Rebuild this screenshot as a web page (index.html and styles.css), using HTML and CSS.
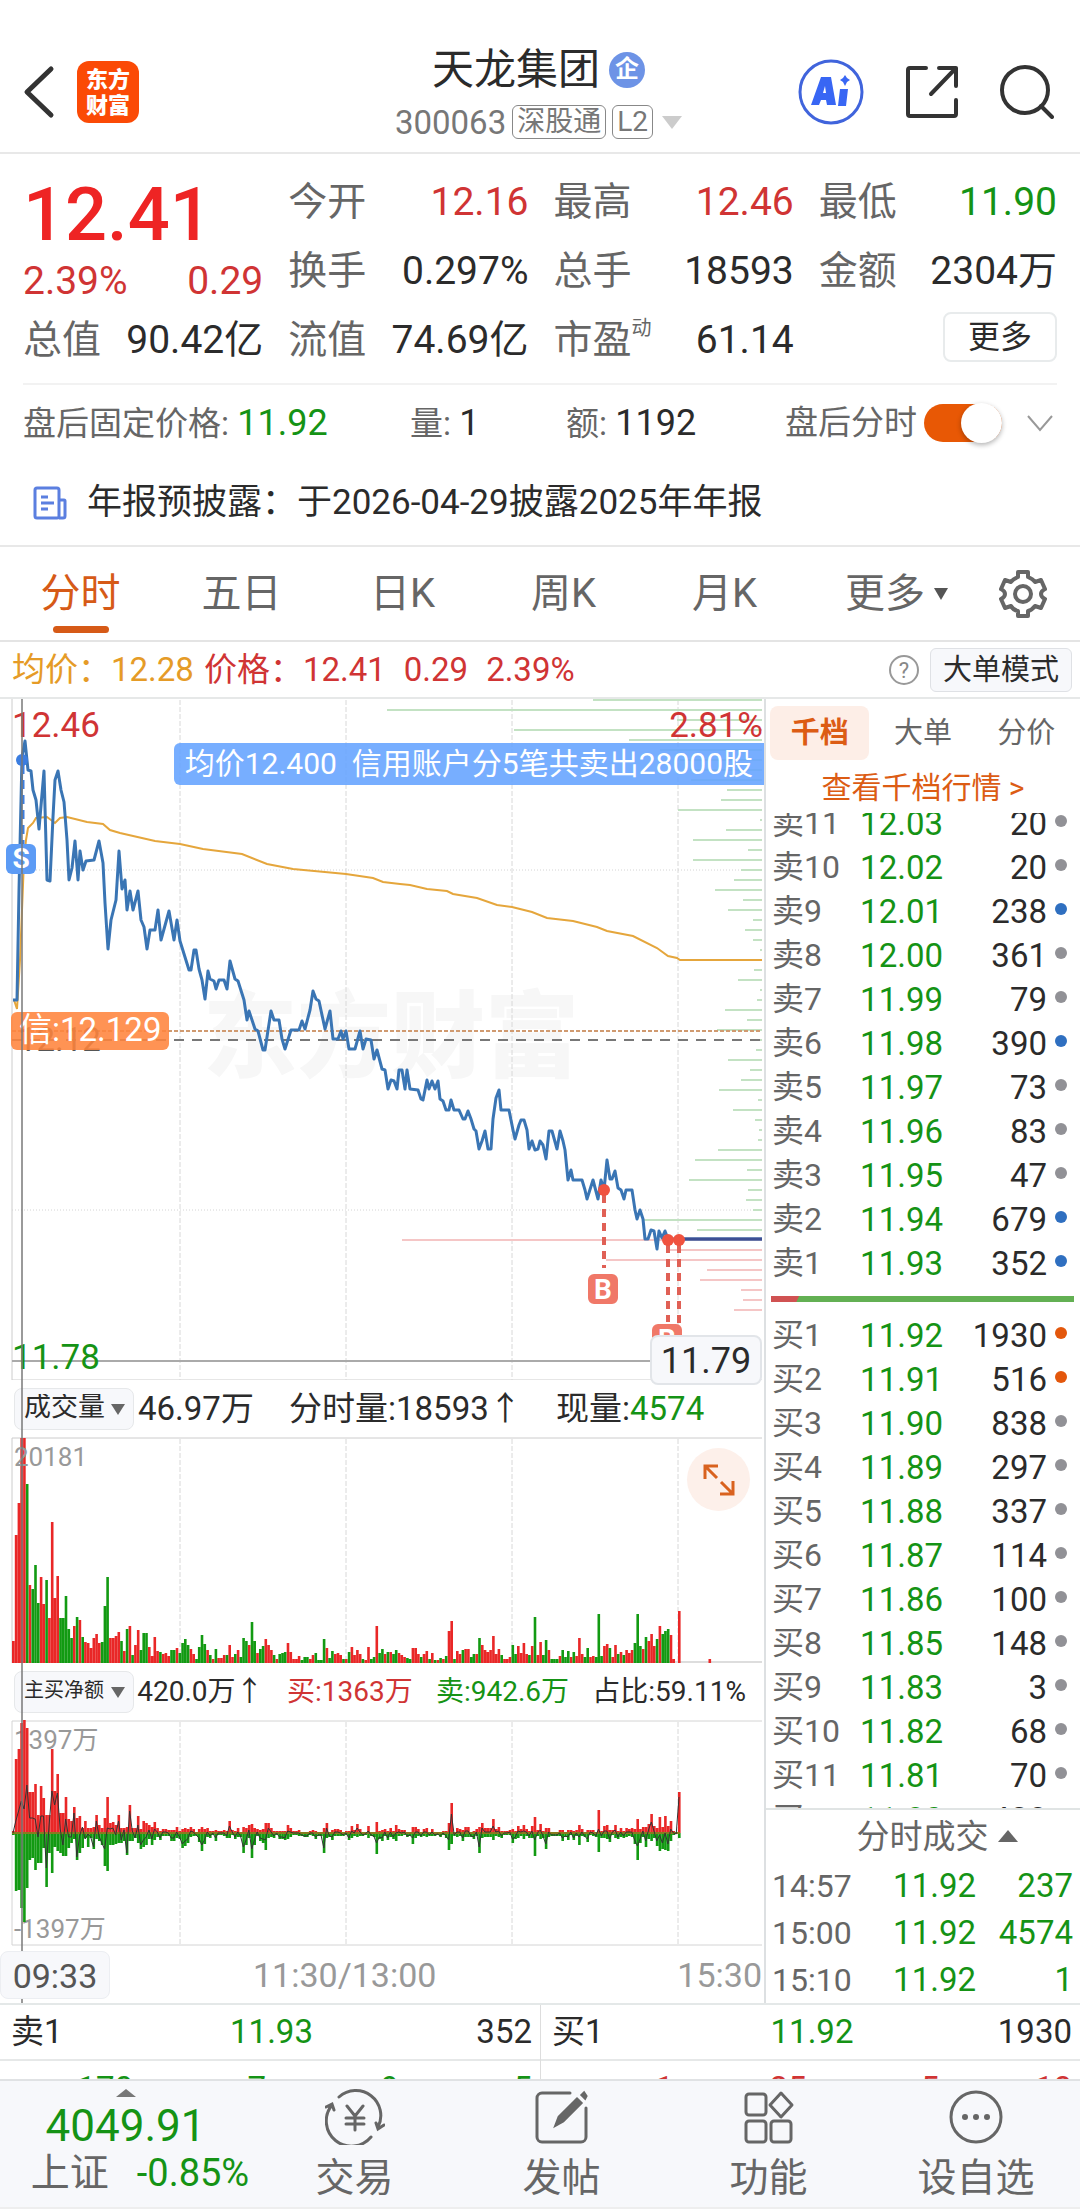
FILE: index.html
```html
<!DOCTYPE html>
<html lang="zh-CN">
<head>
<meta charset="utf-8">
<meta name="viewport" content="width=device-width">
<title>天龙集团 300063</title>
<link rel="stylesheet" href="styles.css">
</head>
<body>
<header class="topbar">
  <div class="topbar-side">
    <button class="icon-btn back" aria-label="返回"><svg width="32" height="54" viewBox="0 0 32 54"><path d="M28 4 4 27l24 23" fill="none" stroke="#333" stroke-width="5" stroke-linecap="round" stroke-linejoin="round"/></svg></button>
    <span class="logo">东方<br>财富</span>
  </div>
  <div class="title-block">
    <h1 class="stock-name">天龙集团<span class="corp">企</span></h1>
    <p class="stock-code">300063<span class="tag">深股通</span><span class="tag">L2</span><svg class="drop" width="20" height="13" viewBox="0 0 20 13"><path d="M0 0h20L10 13z" fill="#ccc"/></svg></p>
  </div>
  <div class="topbar-side topbar-actions">
    <button class="icon-btn" aria-label="AI"><svg width="66" height="66" viewBox="0 0 66 66"><circle cx="33" cy="33" r="31" fill="none" stroke="#4064dc" stroke-width="3"/><path d="M13 46 23 18h10l5 28h-9l-1-5h-5l-2 5zM25 34h3l-1-7zM42 30h8l-2 17h-8z" fill="#3866f4"/><path d="m47 16 2 3 3 2-3 2-2 4-2-4-3-2 3-2z" fill="#3866f4"/></svg></button>
    <button class="icon-btn" aria-label="分享"><svg width="54" height="54" viewBox="0 0 54 54" fill="none" stroke="#333" stroke-width="4" stroke-linecap="round" stroke-linejoin="round"><path d="M21 3H5a2 2 0 0 0-2 2v44a2 2 0 0 0 2 2h44a2 2 0 0 0 2-2V35M34 3h17v18M51 3 26 29"/></svg></button>
    <button class="icon-btn" aria-label="搜索"><svg width="54" height="54" viewBox="0 0 54 54" fill="none" stroke="#333" stroke-width="4" stroke-linecap="round"><circle cx="25" cy="25" r="23"/><path d="m41 41 11 11"/></svg></button>
  </div>
</header>

<section class="quote">
  <div class="quote-col">
    <div class="last up">12.41</div>
    <div class="pair change up"><span>2.39%</span><span>0.29</span></div>
    <div class="pair"><span class="lbl">总值</span><span>90.42亿</span></div>
  </div>
  <div class="quote-col">
    <div class="pair"><span class="lbl">今开</span><span class="up">12.16</span></div>
    <div class="pair"><span class="lbl">换手</span><span>0.297%</span></div>
    <div class="pair"><span class="lbl">流值</span><span>74.69亿</span></div>
  </div>
  <div class="quote-col">
    <div class="pair"><span class="lbl">最高</span><span class="up">12.46</span></div>
    <div class="pair"><span class="lbl">总手</span><span>18593</span></div>
    <div class="pair"><span class="lbl">市盈<sup>动</sup></span><span>61.14</span></div>
  </div>
  <div class="quote-col">
    <div class="pair"><span class="lbl">最低</span><span class="down">11.90</span></div>
    <div class="pair"><span class="lbl">金额</span><span>2304万</span></div>
    <div class="pair pair-end"><button class="more-btn">更多</button></div>
  </div>
</section>

<section class="after">
  <span class="after-price">盘后固定价格: <b class="down">11.92</b></span>
  <span class="after-vol">量: <b>1</b></span>
  <span class="after-amt">额: <b>1192</b></span>
  <label class="switch-row">盘后分时<input type="checkbox" class="switch" checked></label>
  <svg width="28" height="18" viewBox="0 0 28 18"><path d="m2 2 12 14L26 2" fill="none" stroke="#999" stroke-width="2"/></svg>
</section>

<a class="news" href="#report">
  <svg width="34" height="34" viewBox="0 0 34 34" fill="none" stroke="#5b7fe0" stroke-width="3"><rect x="2" y="2" width="24" height="30" rx="2"/><path d="M26 14h5a1 1 0 0 1 1 1v15a2 2 0 0 1-2 2h-4M8 11h7M8 17h13M8 23h7"/></svg>
  <span>年报预披露：于2026-04-29披露2025年年报</span>
</a>

<nav class="period">
  <button class="period-tab active">分时</button>
  <button class="period-tab">五日</button>
  <button class="period-tab">日K</button>
  <button class="period-tab">周K</button>
  <button class="period-tab">月K</button>
  <button class="period-tab more-tab">更多<svg width="14" height="12" viewBox="0 0 14 12"><path d="M0 0h14L7 12z" fill="#555"/></svg></button>
  <button class="icon-btn gear" aria-label="设置"><svg width="48" height="50" viewBox="0 0 48 50" fill="none" stroke="#666" stroke-width="4" stroke-linejoin="round"><path d="M19 3h10v5q5 2 7 5l6-2 4 9q-4 2-4 5t4 5l-4 9-6-2q-3 4-7 5v5H19v-5q-5-1-7-5l-6 2-4-9q4-2 4-5t-4-5l4-9 6 2q2-3 7-5z"/><circle cx="24" cy="25" r="8"/></svg></button>
</nav>

<div class="legend">
  <span class="avg">均价：12.28</span>
  <span class="up">价格：12.41</span>
  <span class="up">0.29</span>
  <span class="up">2.39%</span>
  <span class="help">?</span>
  <button class="mode-btn">大单模式</button>
</div>

<main class="board">
  <section class="charts">
    <div class="pane pane-price">
      <span class="watermark">东方财富</span>
      <svg class="plot" viewBox="0 699 764 681" preserveAspectRatio="none" fill="none">
        <path d="M12 699V1380H762" stroke="#ccc"/>
        <path d="M180 700V1380M346 700V1380M512 700V1380M678 700V1380" stroke="#d8d8d8" stroke-dasharray="5 2"/>
        <path d="M12 870H762M12 1210H762" stroke="#d4d4d4" stroke-dasharray="1 2"/>
        <path id="depthSell" stroke="#c3e2c3" stroke-width="2"/>
        <path id="depthBuy" stroke="#f5c6c6" stroke-width="2"/>
        <path d="M12 1040H762" stroke="#777" stroke-width="2" stroke-dasharray="10 8"/>
        <path d="M12 1031H762" stroke="#d09a70" stroke-width="2" stroke-dasharray="4 2"/>
        <path d="M12 1361H762" stroke="#aaa" stroke-width="2"/>
        <polyline stroke="#e5a63c" stroke-width="2" points="14,1000 17,1009 20,960 24,860 26,840 28,828 33,823 36,818 47,817 55,823 60,818 67,817 87,822 103,824 110,830 120,833 155,841 180,844 203,849 242,854 267,864 293,869 346,874 373,878 383,882 400,884 410,885 427,889 447,891 453,894 477,898 497,905 512,907 532,912 547,918 573,921 597,927 607,931 633,936 657,948 668,956 677,958 680,960 762,960"/>
        <polyline stroke="#3a75b4" stroke-width="3" stroke-linejoin="round" points="13,1000 17,1000 19,890 22,757 25,741 28,770 31,771 33,790 36,800 39,829 44,771 47,880 50,881 53,817 55,780 58,771 61,790 64,802 67,840 69,880 72,868 75,841 78,880 80,851 83,870 86,861 94,860 99,841 103,863 105,903 108,949 111,920 116,900 119,851 122,889 125,880 127,910 130,891 133,910 138,891 141,920 144,927 147,949 150,930 155,930 158,910 161,940 169,911 174,940 177,920 180,941 189,970 191,970 194,950 196,950 199,969 202,980 205,999 208,971 210,979 214,981 216,989 219,980 224,980 227,989 230,961 235,979 238,981 244,1000 247,1020 249,1011 255,1029 258,1031 263,1050 265,1050 271,1011 274,1020 279,1020 282,1039 285,1049 291,1030 299,1030 302,1021 305,1029 310,1010 313,991 316,999 319,1001 325,1029 330,1011 333,1039 338,1039 341,1031 343,1039 346,1031 349,1049 355,1049 360,1031 363,1049 366,1039 371,1040 374,1059 377,1050 382,1069 385,1070 388,1089 391,1080 394,1081 397,1089 399,1070 402,1070 405,1089 407,1070 410,1089 418,1090 421,1099 423,1100 427,1080 429,1089 432,1081 435,1089 438,1081 440,1099 443,1101 446,1110 449,1110 451,1100 454,1110 459,1110 463,1119 465,1119 468,1111 471,1119 474,1129 476,1131 479,1149 482,1141 485,1131 488,1149 491,1149 493,1119 496,1098 499,1090 501,1110 509,1110 513,1130 515,1139 519,1125 521,1120 524,1120 527,1130 529,1149 532,1141 535,1150 538,1149 540,1141 543,1145 546,1159 549,1131 552,1131 557,1149 560,1131 563,1141 565,1150 568,1180 571,1170 573,1180 582,1180 585,1190 587,1199 593,1180 598,1199 601,1180 604,1190 607,1160 610,1179 612,1179 615,1171 618,1188 621,1190 624,1199 626,1190 632,1190 635,1210 637,1219 640,1210 643,1219 645,1239 648,1239 651,1230 654,1231 657,1249 659,1231 662,1238 665,1231 668,1239 762,1239"/>
        <path d="M23 765V845" stroke="#3b7de0" stroke-width="3" stroke-dasharray="9 6"/>
        <circle cx="22" cy="760" r="6" fill="#3b7de0"/>
        <path d="M604 1195V1268M668 1245V1322M679 1245V1330" stroke="#e06055" stroke-width="4" stroke-dasharray="8 6"/>
        <path d="M684 1239H762" stroke="#3d4f94" stroke-width="3"/>
        <g fill="#f0523f"><circle cx="604" cy="1190" r="6"/><circle cx="668" cy="1240" r="6"/><circle cx="679" cy="1240" r="6"/></g>
      </svg>
      <span class="over high up">12.46</span>
      <span class="over high-pct up">2.81%</span>
      <span class="over low down">11.78</span>
      <span class="over mid">12.12</span>
      <span class="over cost">信:12.129</span>
      <span class="over trade-tip">均价12.400&nbsp; 信用账户分5笔共卖出28000股</span>
      <span class="over mark mark-s">S</span>
      <span class="over mark mark-b">B</span>
      <span class="over mark mark-b mark-b2">B</span>
      <span class="over cursor-price">11.79</span>
    </div>

    <div class="pane-head">
      <span class="picker"><select aria-label="副图指标一"><option>成交量</option></select></span>
      <span class="item-a">46.97万</span><span class="item-b">分时量:18593↑</span><span>现量:<span class="down">4574</span></span>
    </div>
    <div class="pane pane-sub">
      <svg class="plot" viewBox="0 0 764 226" preserveAspectRatio="none" fill="none">
        <path d="M12 226V1H762" stroke="#ccc"/>
        <path d="M180 2V226M346 2V226M512 2V226M678 2V226" stroke="#d8d8d8" stroke-dasharray="5 2"/>
        <path d="M12 225H762" stroke="#ddd" stroke-width="2"/>
        <path id="volUp" fill="#e92727"/>
        <path id="volDown" fill="#129a12"/>
      </svg>
      <span class="over scale-top">20181</span>
      <button class="over expand" aria-label="全屏"><svg width="32" height="32" viewBox="0 0 32 32" fill="none" stroke="#d9621f" stroke-width="3"><path d="M2 15V2h13M2 2l12 12M30 17v13H17M30 30 18 18"/></svg></button>
    </div>

    <div class="pane-head compact">
      <span class="picker"><select aria-label="副图指标二"><option>主买净额</option></select></span>
      <span>420.0万↑</span><span class="up">买:1363万</span><span class="down">卖:942.6万</span><span>占比:59.11%</span>
    </div>
    <div class="pane pane-sub">
      <span class="over scale-top">1397万</span>
      <span class="over scale-bottom">-1397万</span>
      <svg class="plot" viewBox="0 0 764 226" preserveAspectRatio="none" fill="none">
        <path d="M12 225V1H762M12 225H762" stroke="#d4d4d4"/>
        <path d="M180 2V226M346 2V226M512 2V226M678 2V226" stroke="#d8d8d8" stroke-dasharray="5 2"/>
        <path id="netUp" fill="#e92727"/>
        <path id="netDown" fill="#129a12"/>
        <path d="M12 113H680" stroke="#8a7a20" stroke-width="2"/>
        <path id="netLine" stroke="#333" stroke-width="1"/>
      </svg>
    </div>
    <div class="time-axis"><span class="cursor-time">09:33</span><span class="noon">11:30/13:00</span><span>15:30</span></div>
    <i class="crosshair"></i>
  </section>

  <aside class="book">
    <div class="book-tabs">
      <button class="book-tab active">千档</button><button class="book-tab">大单</button><button class="book-tab">分价</button>
    </div>
    <a class="book-link" href="#levels">查看千档行情 &gt;</a>
    <div class="book-sell">
      <table class="levels">
        <tr><th>卖11</th><td class="down">12.03</td><td>20</td><td><i class="dot"></i></td></tr>
        <tr><th>卖10</th><td class="down">12.02</td><td>20</td><td><i class="dot"></i></td></tr>
        <tr><th>卖9</th><td class="down">12.01</td><td>238</td><td><i class="dot blue"></i></td></tr>
        <tr><th>卖8</th><td class="down">12.00</td><td>361</td><td><i class="dot"></i></td></tr>
        <tr><th>卖7</th><td class="down">11.99</td><td>79</td><td><i class="dot"></i></td></tr>
        <tr><th>卖6</th><td class="down">11.98</td><td>390</td><td><i class="dot blue"></i></td></tr>
        <tr><th>卖5</th><td class="down">11.97</td><td>73</td><td><i class="dot"></i></td></tr>
        <tr><th>卖4</th><td class="down">11.96</td><td>83</td><td><i class="dot"></i></td></tr>
        <tr><th>卖3</th><td class="down">11.95</td><td>47</td><td><i class="dot"></i></td></tr>
        <tr><th>卖2</th><td class="down">11.94</td><td>679</td><td><i class="dot blue"></i></td></tr>
        <tr><th>卖1</th><td class="down">11.93</td><td>352</td><td><i class="dot blue"></i></td></tr>
      </table>
    </div>
    <div class="ratio"></div>
    <div class="book-buy">
      <table class="levels">
        <tr><th>买1</th><td class="down">11.92</td><td>1930</td><td><i class="dot orange"></i></td></tr>
        <tr><th>买2</th><td class="down">11.91</td><td>516</td><td><i class="dot orange"></i></td></tr>
        <tr><th>买3</th><td class="down">11.90</td><td>838</td><td><i class="dot"></i></td></tr>
        <tr><th>买4</th><td class="down">11.89</td><td>297</td><td><i class="dot"></i></td></tr>
        <tr><th>买5</th><td class="down">11.88</td><td>337</td><td><i class="dot"></i></td></tr>
        <tr><th>买6</th><td class="down">11.87</td><td>114</td><td><i class="dot"></i></td></tr>
        <tr><th>买7</th><td class="down">11.86</td><td>100</td><td><i class="dot"></i></td></tr>
        <tr><th>买8</th><td class="down">11.85</td><td>148</td><td><i class="dot"></i></td></tr>
        <tr><th>买9</th><td class="down">11.83</td><td>3</td><td><i class="dot"></i></td></tr>
        <tr><th>买10</th><td class="down">11.82</td><td>68</td><td><i class="dot"></i></td></tr>
        <tr><th>买11</th><td class="down">11.81</td><td>70</td><td><i class="dot"></i></td></tr>
        <tr><th>买12</th><td class="down">11.80</td><td>428</td><td></td></tr>
      </table>
    </div>
    <button class="ticks-head">分时成交<svg width="20" height="12" viewBox="0 0 20 12"><path d="M0 12h20L10 0z" fill="#666"/></svg></button>
    <table class="ticks">
      <tr><th>14:57</th><td>11.92</td><td>237</td></tr>
      <tr><th>15:00</th><td>11.92</td><td>4574</td></tr>
      <tr><th>15:10</th><td>11.92</td><td>1</td></tr>
    </table>
  </aside>
</main>

<section class="best">
  <div class="best-side">
    <div class="best-row"><span>卖1</span><span class="down">11.93</span><span>352</span></div>
    <div class="queue down"><span>170</span><span>7</span><span>9</span><span>5</span></div>
  </div>
  <div class="best-side">
    <div class="best-row"><span>买1</span><span class="down">11.92</span><span>1930</span></div>
    <div class="queue up"><span>1</span><span>25</span><span>5</span><span>18</span></div>
  </div>
</section>

<footer class="dock">
  <button class="index-card">
    <svg width="20" height="8" viewBox="0 0 20 8"><path d="M0 8h20L10 0z" fill="#777"/></svg>
    <span class="index-value down">4049.91</span>
    <span class="index-line">上证<span class="down">-0.85%</span></span>
  </button>
  <a class="dock-item" href="#trade"><svg width="60" height="56" viewBox="0 0 60 56" fill="none" stroke="#666" stroke-width="3" stroke-linecap="round"><path d="M14 8A25 25 0 0 1 53 38M46 48A25 25 0 0 1 7 16M1 18l6-3 2 6M59 36l-6 4-2-6M22 17l8 10 8-10M30 27v14M21 29h18M21 35h18"/></svg>交易</a>
  <a class="dock-item" href="#post"><svg width="60" height="56" viewBox="0 0 60 56" fill="none" stroke="#666" stroke-width="3" stroke-linecap="round"><path d="M38 4H10a5 5 0 0 0-5 5v39a5 5 0 0 0 5 5h39a5 5 0 0 0 5-5V19"/><path d="m24 36 3-8 18-18 4 4-18 18zM50 6l2-2 2 3-1 2z" fill="#666"/></svg>发帖</a>
  <a class="dock-item" href="#tools"><svg width="60" height="56" viewBox="0 0 60 56" fill="none" stroke="#666" stroke-width="3" stroke-linejoin="round"><rect x="7" y="5" width="20" height="21" rx="3"/><rect x="7" y="32" width="20" height="21" rx="3"/><rect x="32" y="32" width="20" height="21" rx="3"/><path d="m42 4 11 12-11 12-11-12z"/></svg>功能</a>
  <a class="dock-item" href="#watch"><svg width="60" height="56" viewBox="0 0 60 56"><circle cx="30" cy="28" r="25" fill="none" stroke="#666" stroke-width="3"/><g fill="#666"><circle cx="19" cy="28" r="3"/><circle cx="30" cy="28" r="3"/><circle cx="41" cy="28" r="3"/></g></svg>设自选</a>
</footer>
<script src="charts.js"></script>
</body>
</html>
```

FILE: styles.css
```css
* { box-sizing: border-box; }
body {
  margin: 0;
  background: #fff;
  color: #2b2b2b;
  font-family: Roboto, "Noto Sans CJK SC", sans-serif;
  font-size: 33px;
  line-height: 1;
}
button, select { font: inherit; color: inherit; background: none; border: 0; padding: 0; margin: 0; }
a { color: inherit; text-decoration: none; }
h1, p { margin: 0; font-weight: 400; }
svg { display: block; flex: none; }
table { border-collapse: collapse; width: 100%; }
th, td { padding: 0; font-weight: 400; }
b { font-weight: 400; }

.up { color: #d03434; }
.down { color: #159315; }
.lbl { color: #666; }
.icon-btn { display: flex; }

/* header */
.topbar {
  display: grid;
  grid-template-columns: 1fr auto 1fr;
  height: 154px;
  padding: 31px 26px 0 23px;
  border-bottom: 2px solid #e8e8e8;
}
.topbar-side { display: flex; align-items: center; gap: 22px; }
.topbar-actions { justify-content: flex-end; gap: 41px; }
.logo {
  width: 62px; height: 62px; padding-top: 6px;
  border-radius: 12px; background: #fb4a06; color: #fff;
  font-size: 22px; font-weight: 900; line-height: 26px; text-align: center;
}
.title-block { display: flex; flex-direction: column; align-items: center; gap: 12px; padding-top: 16px; }
.stock-name { display: flex; align-items: center; gap: 9px; font-size: 42px; line-height: 46px; }
.corp {
  width: 36px; height: 36px; border-radius: 50%; background: #6d93e6; color: #fff;
  font-size: 24px; font-weight: 700; line-height: 34px; text-align: center;
}
.stock-code { display: flex; align-items: center; gap: 6px; color: #777; }
.tag { height: 34px; padding: 0 4px; border: 1px solid #888; border-radius: 6px; font-size: 28px; line-height: 31px; }
.drop { margin-left: 3px; }

/* quote summary */
.quote {
  display: grid;
  grid-template-columns: 240fr 240fr 240fr 238fr;
  column-gap: 25px;
  margin: 0 23px;
  padding: 14px 0 8px;
  border-bottom: 2px solid #f2f2f2;
  font-size: 39px;
}
.quote-col { display: flex; flex-direction: column; }
.pair { display: flex; justify-content: space-between; height: 69px; line-height: 69px; white-space: nowrap; }
.last { height: 86px; padding-top: 12px; font-size: 74px; font-weight: 500; line-height: 69px; color: #ee2424; }
.change { height: 52px; line-height: 54px; }
.pair sup { font-size: 20px; line-height: 20px; vertical-align: 18px; }
.pair-end { justify-content: flex-end; }
.more-btn { width: 114px; height: 50px; margin-top: 6px; border: 2px solid #e8ebec; border-radius: 8px; font-size: 32px; line-height: 44px; }

/* after-hours line */
.after { display: flex; align-items: center; height: 75px; padding: 0 26px 0 23px; color: #666; }
.after b { font-size: 36px; color: #2b2b2b; }
.after b.down { color: #159315; }
.after-price { width: 387px; }
.after-vol { width: 156px; }
.after-amt { flex: 1; }
.switch-row { display: flex; align-items: center; gap: 7px; margin-right: 24px; }
.switch {
  appearance: none; position: relative; width: 78px; height: 38px; margin: 0;
  border-radius: 19px; background: #e85805;
}
.switch::after {
  content: ""; position: absolute; top: -1px; right: 0; width: 41px; height: 40px;
  border-radius: 50%; background: #fff; box-shadow: 0 2px 5px rgba(0, 0, 0, .3);
}

.news { display: flex; align-items: center; gap: 20px; height: 87px; padding: 0 33px; border-bottom: 2px solid #e8e8e8; font-size: 35px; }

/* period tabs */
.period { display: grid; grid-template-columns: repeat(6, minmax(0, 161fr)) minmax(0, 114fr); height: 95px; border-bottom: 2px solid #e4e4e4; color: #666; font-size: 40px; }
.period-tab { position: relative; display: flex; align-items: center; justify-content: center; gap: 9px; }
.more-tab { padding-left: 22px; }
.period-tab.active { color: #d65a17; }
.period-tab.active::after { content: ""; position: absolute; bottom: 7px; width: 56px; height: 7px; border-radius: 4px; background: #d65a17; }
.gear { align-items: center; justify-content: center; }

.legend { display: flex; align-items: center; gap: 18px; height: 57px; padding: 0 8px 0 12px; border-bottom: 2px solid #e6e8e8; font-size: 33px; }
.avg { color: #e59b27; margin-right: -8px; }
.help { width: 30px; height: 30px; margin-left: auto; margin-right: -7px; border: 2px solid #999; border-radius: 50%; color: #888; font-size: 22px; line-height: 27px; text-align: center; }
.mode-btn { width: 142px; height: 44px; border: 1px solid #dfe1e5; border-radius: 6px; background: #f7f8fb; font-size: 29px; line-height: 38px; }

/* charts and order book */
.board { display: grid; grid-template-columns: minmax(0, 764fr) minmax(0, 316fr); border-bottom: 2px solid #e4e8e8; }
.charts { position: relative; }
.pane { position: relative; }
.pane-price { height: 681px; }
.pane-sub { height: 226px; }
.plot { position: relative; width: 100%; height: 100%; }
.watermark { position: absolute; top: 284px; left: 0; width: 100%; padding-left: 18px; color: #f7f7f7; font-size: 94px; font-weight: 900; line-height: 110px; text-align: center; }
.over { position: absolute; white-space: nowrap; }
.high { top: 9px; left: 12px; font-size: 35px; }
.high-pct { top: 9px; right: 1px; font-size: 35px; }
.low { bottom: 5px; left: 12px; font-size: 35px; }
.mid { top: 324px; left: 18px; color: #555; }
.cost { top: 313px; left: 11px; height: 38px; padding: 0 8px; border-radius: 6px; background: rgba(255, 132, 60, .88); color: #fff; line-height: 36px; }
.trade-tip { top: 44px; right: 0; height: 42px; padding: 0 11px; border-radius: 6px 0 0 6px; background: rgba(100, 163, 255, .88); color: #fff; font-size: 30px; line-height: 41px; }
.mark { width: 30px; height: 30px; border-radius: 6px; color: #fff; font-size: 28px; font-weight: 700; line-height: 30px; text-align: center; }
.mark-s { top: 145px; left: 6px; background: #5c9bf5; }
.mark-b { top: 575px; left: 588px; border: 3px solid #f07868; background: #f07868; line-height: 25px; }
.mark-b2 { top: 625px; left: 652px; }
.cursor-price { right: 2px; bottom: -5px; width: 112px; height: 50px; border: 2px solid #e2e5e9; border-radius: 8px; background: #f7f8fb; z-index: 1; font-size: 36px; line-height: 48px; text-align: center; }

.pane-head { display: flex; align-items: center; height: 57px; padding: 0 0 0 14px; white-space: nowrap; }
.picker { position: relative; flex: none; width: 120px; height: 42px; margin-right: 4px; }
.picker::after { content: ""; position: absolute; right: 9px; top: 16px; border: 7px solid transparent; border-top: 11px solid #666; border-bottom: 0; }
.picker select { appearance: none; width: 120px; height: 42px; padding: 0 0 4px 9px; border: 1px solid #e6e8ea; border-radius: 8px; background: #f7f8fb; font-size: 27px; }
.item-a { width: 151px; }
.item-b { width: 267px; }
.compact { justify-content: space-between; padding-right: 18px; font-size: 28px; }
.compact .picker { margin-right: -20px; }
.compact .picker select { font-size: 20px; }
.scale-top { top: 7px; left: 14px; color: #999; font-size: 26px; }
.scale-bottom { bottom: 4px; left: 14px; color: #999; font-size: 26px; }
.expand { top: 11px; right: 14px; display: flex; align-items: center; justify-content: center; width: 63px; height: 63px; border-radius: 50%; background: #fdf0ea; }
.time-axis { display: flex; align-items: center; height: 57px; padding: 0 2px 0 0; color: #999; font-size: 34px; }
.cursor-time { width: 110px; height: 48px; border: 1px solid #eceef2; border-radius: 8px; background: #f7f8fb; color: #555; line-height: 48px; text-align: center; position: relative; z-index: 1; }
.noon { margin: 0 auto 0 143px; }
.crosshair { position: absolute; top: 0; bottom: 0; left: 21px; width: 2px; background: rgba(120, 120, 120, .75); }

.book { border-left: 2px solid #dde0e2; }
.book-tabs { display: flex; gap: 4px; height: 66px; padding: 7px 4px 5px; color: #666; font-size: 29px; }
.book-tab { flex: 1; border-radius: 8px; }
.book-tab.active { background: #fdeee7; color: #dc5c14; font-weight: 700; }
.book-link { display: block; height: 48px; line-height: 46px; color: #dc5c14; font-size: 30px; text-align: center; }
.book-sell { display: flex; flex-direction: column; justify-content: flex-end; height: 472px; overflow: hidden; }
.book-buy { height: 497px; overflow: hidden; border-bottom: 2px solid #e0e4e4; }
.levels { flex: none; table-layout: fixed; }
.levels tr { height: 44px; }
.levels th { width: 85px; padding-left: 6px; color: #666; font-size: 32px; text-align: left; white-space: nowrap; }
.levels td { text-align: right; }
.levels td:nth-child(2) { width: 92px; }
.levels td:nth-child(4) { width: 33px; }
.dot { display: block; width: 12px; height: 12px; margin: 0 0 4px 8px; border-radius: 50%; background: #919196; }
.blue { background: #2f6fc0; }
.orange { background: #e3570c; }
.ratio { height: 6px; margin: 11px 6px 11px 5px; background: linear-gradient(115deg, #d05252 25px, #63b053 26px); }
.ticks-head { display: flex; align-items: center; justify-content: center; gap: 9px; width: 100%; height: 52px; padding-left: 28px; color: #666; }
.ticks tr { height: 47px; }
.ticks th { padding-left: 6px; color: #666; font-size: 32px; text-align: left; }
.ticks td { color: #159315; text-align: right; }
.ticks td:last-child { width: 104px; padding-right: 7px; }

/* best bid and ask */
.best { display: grid; grid-template-columns: 1fr 1fr; border-bottom: 2px solid #e0e2e4; }
.best-side + .best-side { border-left: 1px solid #ddd; }
.best-row { display: grid; grid-template-columns: 1fr 1fr 1fr; height: 56px; padding: 0 8px 0 11px; border-bottom: 2px solid #e6e8e8; line-height: 54px; }
.best-row span:nth-child(2) { text-align: center; }
.best-row span:last-child { text-align: right; }
.queue { display: grid; grid-template-columns: repeat(4, 1fr); height: 18px; padding: 11px 8px 0 0; overflow: hidden; font-size: 33px; text-align: right; }

/* bottom dock */
.dock { display: grid; grid-template-columns: 251fr 207fr 207fr 207fr 208fr; height: 128px; border-bottom: 2px solid #eee; background: #f7f8fb; color: #666; font-size: 39px; }
.index-card { display: flex; flex-direction: column; align-items: center; padding-top: 8px; }
.index-value { margin-top: 8px; font-size: 44px; line-height: 43px; }
.index-line { display: flex; align-items: center; justify-content: center; gap: 28px; margin-top: 3px; padding-left: 29px; line-height: 44px; }
.index-line .down { font-size: 38px; }
.dock-item { display: flex; flex-direction: column; align-items: center; gap: 7px; padding-top: 8px; line-height: 52px; }
```

FILE: charts.js
```js
// Minute volume: positive bars rose, negative bars fell.
const volume = [22,128,160,225,225,-179,78,-74,-98,-60,86,59,-83,45,141,65,87,-45,-45,-67,-34,-25,37,-46,43,-26,21,20,15,25,29,20,-21,-57,-86,25,25,27,31,-22,12,-34,37,-8,18,33,-13,-30,-30,16,7,26,12,-11,9,10,7,-13,-13,15,-10,-20,-24,-18,14,9,-4,-16,-28,-19,13,-8,4,-14,5,5,8,-8,18,6,-9,13,-6,-25,-22,18,-41,-22,10,-14,-17,24,18,13,-8,4,-9,-10,-11,20,11,4,4,7,-3,-6,-6,4,8,-10,-3,-3,-24,15,-5,-12,9,10,8,-4,4,-11,16,8,13,9,-4,3,16,-4,-6,37,-10,-14,9,-11,11,-9,-13,10,8,6,-5,-4,15,15,9,-6,9,12,-4,10,-3,3,-5,4,-7,32,42,-4,12,9,-13,14,14,-6,-9,9,-25,18,13,11,13,27,9,14,-8,4,4,6,-18,-9,17,10,20,9,-8,17,-46,8,21,-8,-23,13,-4,-4,-4,7,-13,-6,-12,6,-11,7,25,9,-6,-15,6,7,-6,-49,-7,17,19,-15,6,18,-9,11,-8,13,10,13,-20,-49,-17,14,-26,22,29,17,-24,37,-29,-32,-34,28,4,0,52,0,0,0,0,0,0,0,0,0,0,4];
// Active buying and selling per minute; later minutes follow the volume.
const buys = [2,74,84,110,113,105,41,41,49,18,47,35,18,18,84,42,59,20,20,36,14,12,26,15,17,5,12,5,5,6,18,8,5,15,36,10,11,8,18,5,5,6,28,5,5,17,4,12,10,8,6];
const sells = [2,58,57,75,89,55,27,25,37,30,30,15,54,20,40,14,18,20,23,23,15,10,6,27,20,15,5,14,5,16,6,8,12,33,38,12,12,11,10,10,8,22,8,8,5,10,16,14,12,6,12];
const lines = [0,12,22,32,24,48,15,15,14,-4,17,17,-35,8,42,28,40,4,-12,14,-4,-4,20,-24,-3,6,-6,-1,-4,-14,12,-3,-10,-16,5,4,5,-2,12,-7,3,-20,22,2,-5,8,-12,-7,-4,3,-6];
const buyPeaks = {78:12,86:9,92:10,99:8,113:10,124:9,131:11,138:8,157:10,158:30,169:10,173:14,188:16,204:8,211:23,225:14,230:19,235:17,240:41};
const sellPeaks = {61:15,68:18,83:20,86:25,91:17,112:20,131:21,144:11,157:17,168:20,188:23,192:16,204:12,211:19,225:27,233:18,236:18,240:5};
for (let i = buys.length; i < 241; i++) {
  const v = Math.abs(volume[i]), rising = volume[i] > 0;
  buys[i] = buyPeaks[i] || Math.round(v * (rising ? 0.42 : 0.22));
  sells[i] = sellPeaks[i] || Math.round(v * (rising ? 0.24 : 0.5)) + 1;
  lines[i] = buys[i] - sells[i];
}
const step = 2.775, left = 12;
const bars = (data, base, dir) => data.map((h, i) => h > 0 ? `M${(left + i * step).toFixed(1)} ${base}v${-h * dir}h2.6v${h * dir}z` : '').join('');
const draw = (id, d) => document.getElementById(id).setAttribute('d', d);
draw('volUp', bars(volume, 226, 1));
draw('volDown', bars(volume.map(v => -v), 226, 1));
draw('netUp', bars(buys, 113, 1));
draw('netDown', bars(sells, 113, -1));
draw('netLine', 'M' + lines.map((v, i) => `${(left + 1 + i * step).toFixed(1)} ${113 - v}`).join('L'));

// Left end of each order-depth line, one every 10 units down the pane.
const sellDepth = [593,387,677,514,629,660,680,690,691,727,721,678,760,726,693,748,693,741,734,715,743,728,753,745,753,760,735,754,738,760,757,725,747,717,750,756,728,750,741,719,758,733,755,759,758,718,695,747,689,748,746,753,643,697];
const buyDepth = [402,666,606,707,700,741,743,734];
const depth = (data, top) => data.map((x, i) => `M${x} ${top + i * 10}H762`).join('');
draw('depthSell', depth(sellDepth, 700));
draw('depthBuy', depth(buyDepth, 1240));
```
